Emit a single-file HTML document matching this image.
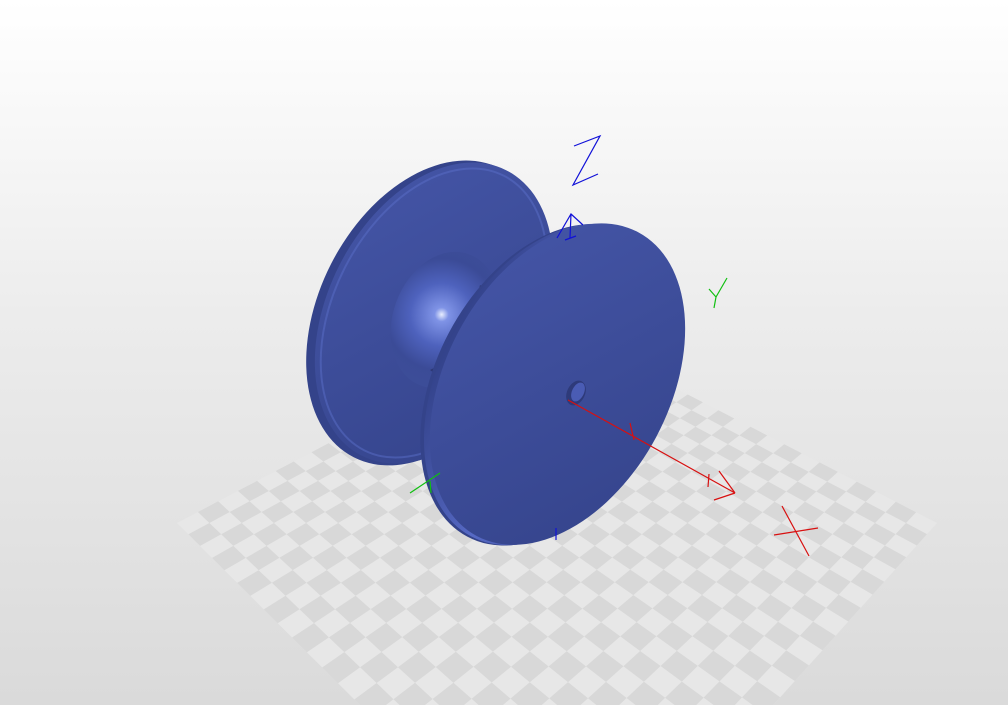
<!DOCTYPE html>
<html><head><meta charset="utf-8"><style>
html,body{margin:0;padding:0;width:1008px;height:705px;overflow:hidden;font-family:"Liberation Sans",sans-serif}
svg{display:block}
</style></head><body>
<svg id="s" width="1008" height="705" viewBox="0 0 1008 705" xmlns="http://www.w3.org/2000/svg">
<defs>
<linearGradient id="bg" x1="0" y1="0" x2="0" y2="1">
<stop offset="0" stop-color="#ffffff"/><stop offset="0.45" stop-color="#ececec"/><stop offset="1" stop-color="#dadada"/>
</linearGradient>
<radialGradient id="hub" cx="440" cy="316" r="70" gradientUnits="userSpaceOnUse">
<stop offset="0" stop-color="#e8eeff"/><stop offset="0.1" stop-color="#7f93e6"/><stop offset="0.45" stop-color="#4e62bd"/><stop offset="0.8" stop-color="#3b4b97"/><stop offset="1" stop-color="#3c4d98"/>
</radialGradient>
<linearGradient id="face" x1="0" y1="0" x2="1" y2="1">
<stop offset="0" stop-color="#4556a8"/><stop offset="1" stop-color="#34438a"/>
</linearGradient>
<linearGradient id="rim" x1="0" y1="0" x2="1" y2="0">
<stop offset="0" stop-color="#33428a"/><stop offset="0.5" stop-color="#5669c4"/><stop offset="1" stop-color="#3a4a98"/>
</linearGradient>
</defs>
<rect width="1008" height="705" fill="url(#bg)"/>
<g id="floor"></g>
<g transform="rotate(27 434 313)">
<ellipse cx="428" cy="316" rx="108" ry="162" fill="#34438a"/>
<ellipse cx="434" cy="313" rx="106" ry="160" fill="url(#face)"/>
<ellipse cx="434" cy="313" rx="100" ry="154" fill="none" stroke="#5a6dc8" stroke-width="2" opacity="0.5"/>
</g>
<ellipse cx="445" cy="320" rx="52" ry="70" fill="url(#hub)" transform="rotate(20 445 320)"/>
<path d="M480 285 Q500 300 498 320 L470 330 Z" fill="#1f2650" opacity="0.6"/>
<path d="M430 370 Q450 385 460 375 L470 350 Z" fill="#1f2650" opacity="0.5"/>
<g transform="rotate(28 557 385)">
<ellipse cx="549" cy="389" rx="112" ry="172" fill="#34438a"/>
<ellipse cx="552" cy="387" rx="112" ry="172" fill="url(#rim)"/>
<ellipse cx="557" cy="384" rx="112" ry="172" fill="url(#face)"/>
</g>
<ellipse cx="576" cy="393" rx="9" ry="13" fill="#2e3a7a" transform="rotate(25 576 393)"/>
<ellipse cx="578" cy="392" rx="6" ry="10" fill="#4a5cb4" transform="rotate(25 578 392)"/>
<g fill="none" stroke-width="1.2">
<path d="M574 146 L600 136 L573 185 L598 174" stroke="#1010d8"/>
<path d="M557 238 L571 214 L583 225 M571 214 L570 238 M565 240 L576 236" stroke="#1010d8"/>
<path d="M556 528 L556 540" stroke="#1010d8"/>
<path d="M727 278 L716 297 L709 289 M716 297 L714 308" stroke="#10c010"/>
<path d="M410 493 L440 473 M430 481 L431 493" stroke="#10c010"/>
<path d="M568 400 L735 493 M735 493 L719 471 M735 493 L714 500 M630 423 L634 440 M709 474 L708 487" stroke="#d81010"/>
<path d="M782 506 L809 556 M774 535 L818 528" stroke="#d81010"/>
</g>
</svg>
<script>
(function(){
var P=[[553,325],[937,523],[578,922],[177,523]];
var x0=P[0][0],y0=P[0][1],x1=P[1][0],y1=P[1][1],x2=P[2][0],y2=P[2][1],x3=P[3][0],y3=P[3][1];
var dx1=x1-x2,dx2=x3-x2,dx3=x0-x1+x2-x3,dy1=y1-y2,dy2=y3-y2,dy3=y0-y1+y2-y3;
var den=dx1*dy2-dx2*dy1;
var g=(dx3*dy2-dx2*dy3)/den,h=(dx1*dy3-dx3*dy1)/den;
var a=x1-x0+g*x1,b=x3-x0+h*x3,c=x0,d=y1-y0+g*y1,e=y3-y0+h*y3,f=y0;
function m(u,v){var w=g*u+h*v+1;return ((a*u+b*v+c)/w).toFixed(1)+','+((d*u+e*v+f)/w).toFixed(1);}
var N=24,s='<polygon points="'+m(0,0)+' '+m(1,0)+' '+m(1,1)+' '+m(0,1)+'" fill="#e7e7e7"/>';
for(var i=0;i<N;i++)for(var j=0;j<N;j++){if((i+j)%2)continue;
var u0=i/N,u1=(i+1)/N,v0=j/N,v1=(j+1)/N;
s+='<polygon points="'+m(u0,v0)+' '+m(u1,v0)+' '+m(u1,v1)+' '+m(u0,v1)+'" fill="#d8d8d8"/>';}
document.getElementById('floor').innerHTML=s;
})();
</script>
</body></html>
